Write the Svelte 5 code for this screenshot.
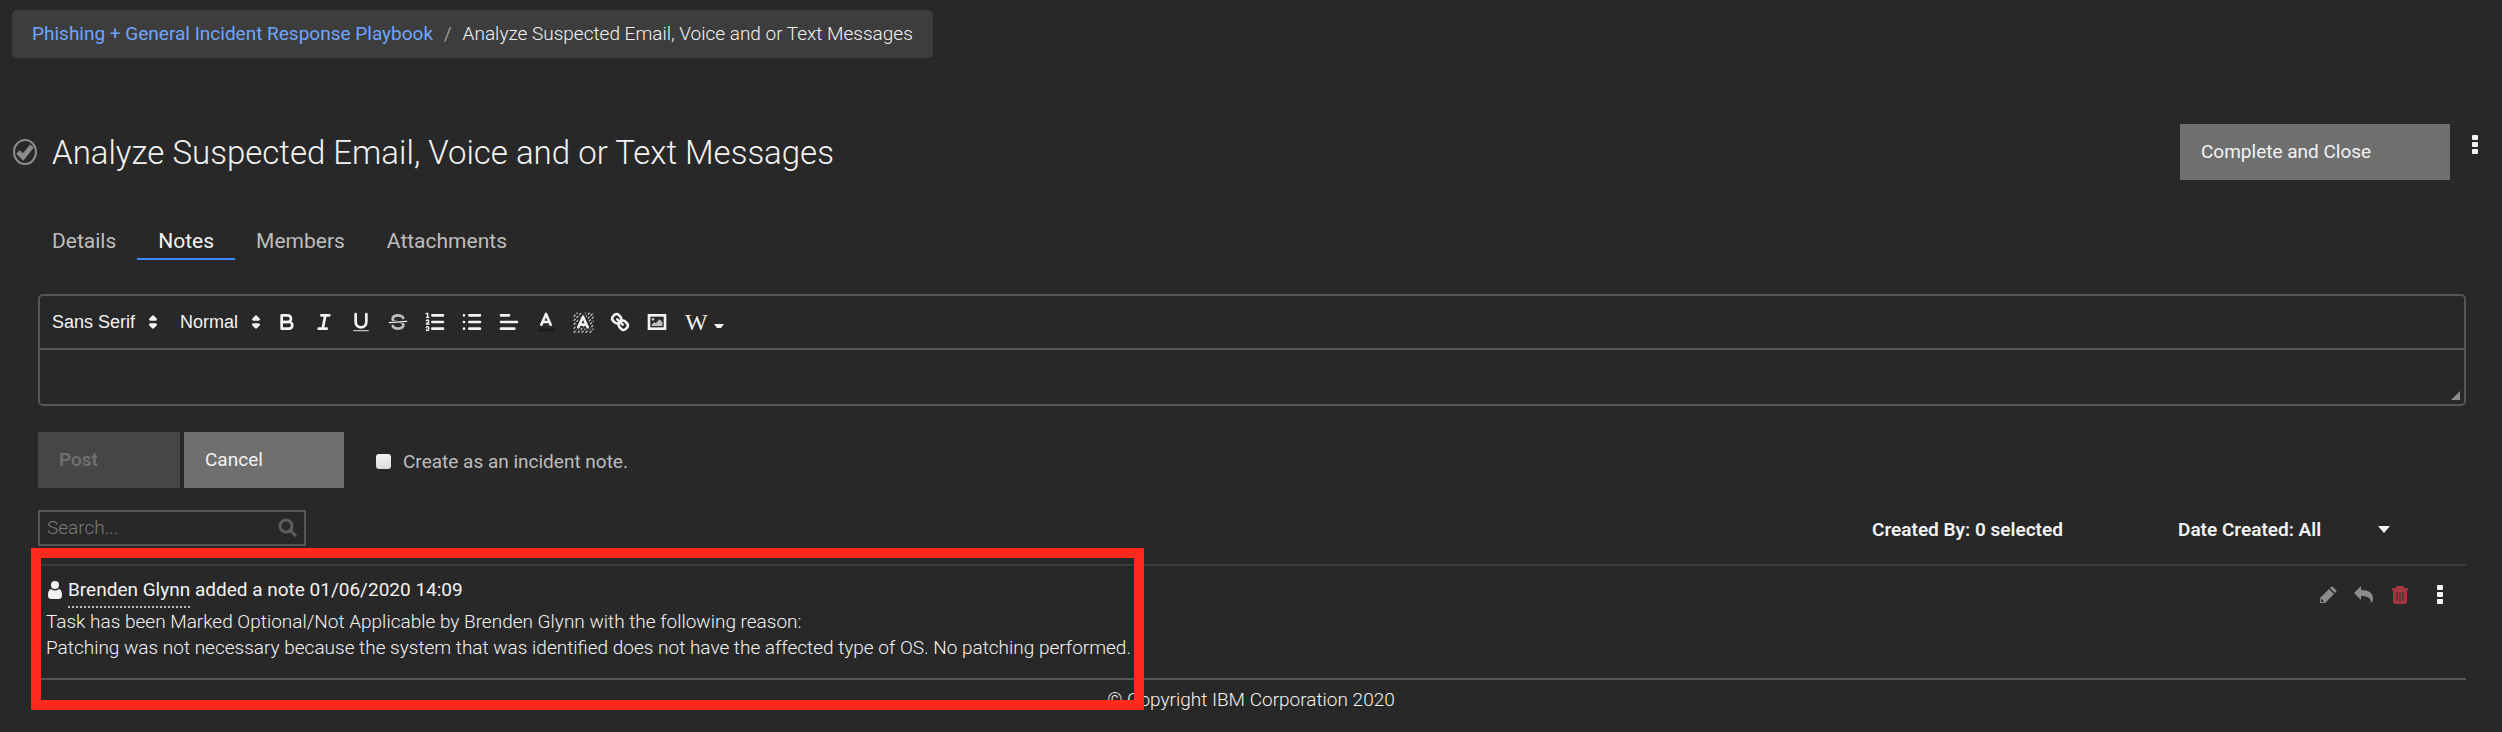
<script lang="ts">
  const tabs = ['Details', 'Notes', 'Members', 'Attachments'];
  let activeTab = $state('Notes');
  let noteBody = $state('');
  let incidentNote = $state(false);
  let search = $state('');
</script>

{#snippet dots()}
  <svg class="dots" viewBox="0 0 6 20" aria-hidden="true">
    <rect x="0" y="0" width="6" height="5" rx="1" />
    <rect x="0" y="7" width="6" height="5" rx="1" />
    <rect x="0" y="14" width="6" height="5" rx="1" />
  </svg>
{/snippet}

{#snippet pickerArrows()}
  <svg class="icon" viewBox="0 0 18 18" aria-hidden="true">
    <polygon class="solid" points="7 11 9 13 11 11 7 11" />
    <polygon class="solid" points="7 7 9 5 11 7 7 7" />
  </svg>
{/snippet}

<div class="page">
  <nav class="breadcrumb">
    <a href="#playbook">Phishing + General Incident Response Playbook</a>
    <span class="slash">/</span>
    <span>Analyze Suspected Email, Voice and or Text Messages</span>
  </nav>

  <header class="task-header">
    <svg class="status" viewBox="0 0 26 28" aria-hidden="true">
      <ellipse cx="13" cy="14" rx="11" ry="12" />
      <path d="M6 14l5 5 9-11" />
    </svg>
    <h1>Analyze Suspected Email, Voice and or Text Messages</h1>
    <button class="btn complete">Complete and Close</button>
    <button class="plain menu" aria-label="Task menu">{@render dots()}</button>
  </header>

  <div class="tabs" role="tablist">
    {#each tabs as tab}
      <button
        class="tab"
        class:active={tab === activeTab}
        role="tab"
        aria-selected={tab === activeTab}
        onclick={() => (activeTab = tab)}>{tab}</button>
    {/each}
  </div>

  <main>
    <div class="editor">
      <div class="toolbar">
        <button class="plain picker">Sans Serif {@render pickerArrows()}</button>
        <button class="plain picker">Normal {@render pickerArrows()}</button>
        <div class="tools">
          <button class="plain" aria-label="Bold">
            <svg class="icon" viewBox="0 0 18 18">
              <path d="M5,4H9.5a2.5,2.5,0,0,1,0,5H5Z" />
              <path d="M5,9h5.5a2.5,2.5,0,0,1,0,5H5Z" />
            </svg>
          </button>
          <button class="plain" aria-label="Italic">
            <svg class="icon" viewBox="0 0 18 18">
              <path d="M7,4H13M5,14H11M8,14L10,4" />
            </svg>
          </button>
          <button class="plain" aria-label="Underline">
            <svg class="icon" viewBox="0 0 18 18">
              <path d="M5,3V9a4,4,0,0,0,8,0V3" />
              <rect class="dim" x="3" y="15" width="12" height="1" rx="0.5" />
            </svg>
          </button>
          <button class="plain" aria-label="Strike">
            <svg class="icon" viewBox="0 0 18 18">
              <path class="dim" d="M9.007,8C6.542,7.791,6,7.519,6,6.5,6,5.792,7.283,5,9,5c1.571,0,2.765.679,2.969,1.309a1,1,0,0,0,1.9-.617C13.356,4.106,11.354,3,9,3,6.2,3,4,4.538,4,6.5a3.2,3.2,0,0,0,.5,1.843Z" />
              <path class="dim" d="M8.984,10C11.457,10.208,12,10.479,12,11.5c0,.708-1.283,1.5-3,1.5-1.571,0-2.765-.679-2.969-1.309a1,1,0,1,0-1.9.617C4.644,13.894,6.646,15,9,15c2.8,0,5-1.538,5-3.5a3.2,3.2,0,0,0-.5-1.843Z" />
              <path class="thin" d="M15.5,8.5L2.5,9.5" />
            </svg>
          </button>
          <button class="plain" aria-label="Numbered list">
            <svg class="icon" viewBox="0 0 18 18">
              <path d="M7,4H15M7,9H15M7,14H15" />
              <path class="thin" d="M2.5,5.5h2M2.3,2.9l1.2-.5V5.5" />
              <path class="thin" d="M4.5,10.5h-2c0-.234,1.85-1.076,1.85-2.234A.959,.959,0,0,0,2.5,8.156" />
              <path class="thin" d="M2.5,14.846a.959,.959,0,0,0,1.85-.109A.7,.7,0,0,0,3.75,14a.688,.688,0,0,0,.6-.736,.959,.959,0,0,0-1.85-.109" />
            </svg>
          </button>
          <button class="plain" aria-label="Bulleted list">
            <svg class="icon" viewBox="0 0 18 18">
              <path d="M7,4H15M7,9H15M7,14H15M3,4H3M3,9H3M3,14H3" />
            </svg>
          </button>
          <button class="plain" aria-label="Align">
            <svg class="icon" viewBox="0 0 18 18">
              <path d="M3,9H15M3,14H13M3,4H9" />
            </svg>
          </button>
          <button class="plain" aria-label="Text color">
            <svg class="icon" viewBox="0 0 18 18">
              <path class="swatch" d="M3,15H15" />
              <path d="M5.5,11L9,3L12.5,11M11.63,9H6.38" />
            </svg>
          </button>
          <button class="plain" aria-label="Highlight color">
            <svg class="icon" viewBox="0 0 18 18">
              <path class="hatch" d="M2,5L5,2M2,8L8,2M2,11L11,2M2,14L14,2M2,17L17,2M5,17L17,5M8,17L17,8M11,17L17,11M14,17L17,14" />
              <path class="knock" d="M5.5,13L9,5L12.5,13" />
              <path d="M5.5,13L9,5L12.5,13M11.63,11H6.38" />
            </svg>
          </button>
          <button class="plain" aria-label="Link">
            <svg class="icon" viewBox="0 0 18 18">
              <path d="M7,7L11,11" />
              <path d="M8.9,4.577a3.476,3.476,0,0,1,.36,4.679A3.476,3.476,0,0,1,4.577,8.9C3.185,7.5,2.035,6.4,4.217,4.217S7.5,3.185,8.9,4.577Z" />
              <path d="M13.423,9.1a3.476,3.476,0,0,0-4.679-.36,3.476,3.476,0,0,0,.36,4.679c1.392,1.392,2.5,2.542,4.679.36S14.815,10.5,13.423,9.1Z" />
            </svg>
          </button>
          <button class="plain" aria-label="Image">
            <svg class="icon" viewBox="0 0 18 18">
              <rect class="frame" x="3" y="4" width="12" height="10" />
              <circle class="dim" cx="6" cy="7" r="1" />
              <polygon class="dim" points="5 12 5 11 7 9 8 10 11 7 13 9 13 12" />
            </svg>
          </button>
        </div>
        <button class="plain wiki" aria-label="Insert field">
          W
          <svg class="wiki-caret" viewBox="0 0 10 5"><path d="M0 0h10L7 4H3z" /></svg>
        </button>
      </div>
      <div class="body">
        <textarea aria-label="Note" rows="1" bind:value={noteBody}></textarea>
        <svg class="grip" viewBox="0 0 9 9" aria-hidden="true"><path d="M9 0v9H0z" /></svg>
      </div>
    </div>

    <div class="actions">
      <button class="btn post" disabled>Post</button>
      <button class="btn cancel">Cancel</button>
      <label class="incident">
        <input type="checkbox" bind:checked={incidentNote} />
        Create as an incident note.
      </label>
    </div>

    <div class="filters">
      <div class="search">
        <input type="text" placeholder="Search..." aria-label="Search notes" bind:value={search} />
        <svg viewBox="0 0 20 20" aria-hidden="true">
          <circle cx="8" cy="8" r="6" />
          <path d="M12 12l6 6" />
        </svg>
      </div>
      <button class="plain filter created-by">Created By: 0 selected</button>
      <button class="plain filter date-created">
        Date Created: All
        <svg viewBox="0 0 12 7" aria-hidden="true"><path d="M0 0h12L6 7z" /></svg>
      </button>
    </div>

    <article class="note">
      <div class="note-text">
        <div class="byline">
          <svg viewBox="0 0 14 18" aria-hidden="true">
            <circle cx="7" cy="4" r="4" />
            <path d="M3 8q4 3 8 0q3 1 3 6q0 4-3 4H3q-3 0-3-4q0-5 3-6z" />
          </svg>
          <span><span class="author">Brenden Glynn</span> added a note 01/06/2020 14:09</span>
        </div>
        <p>Task has been Marked Optional/Not Applicable by Brenden Glynn with the following reason:</p>
        <p>Patching was not necessary because the system that was identified does not have the affected type of OS. No patching performed.</p>
      </div>
      <div class="note-actions">
        <button class="plain" aria-label="Edit">
          <svg class="edit" viewBox="0 0 18 18">
            <path fill-rule="evenodd" d="M1 17v-5l9-9 5 5-9 9zM2 13v3h3v-1H4v-1H3v-1zM11 2l1-1q1-1 2 0l3 3q1 1 0 2l-1 1z" />
          </svg>
        </button>
        <button class="plain" aria-label="Reply">
          <svg class="reply" viewBox="0 0 20 18"><path d="M0 7L7 0v4c8 0 12 3 12 9 0 2-1 3-2 4 0-5-3-7-10-7v4z" /></svg>
        </button>
        <button class="plain" aria-label="Delete">
          <svg class="trash" viewBox="0 0 18 20">
            <path class="lid" d="M1 4H17M6 4V2H12V4" />
            <path d="M2 5H16V17q0 2-2 2H4q-2 0-2-2z" />
            <path class="ribs" d="M6 7V16M9 7V16M12 7V16" />
          </svg>
        </button>
        <button class="plain more" aria-label="Note menu">{@render dots()}</button>
      </div>
      <div class="highlight"></div>
    </article>
  </main>

  <footer>© Copyright IBM Corporation 2020</footer>
</div>

<style>
  :global(body) {
    background: #282828;
  }

  .page {
    box-sizing: border-box;
    min-height: 100vh;
    padding-top: 10px;
    background: #282828;
    color: #f3f3f3;
    font: 300 19px/26px Roboto, sans-serif;
  }

  button,
  input,
  textarea {
    font: inherit;
    color: inherit;
  }

  svg {
    flex-shrink: 0;
    fill: currentColor;
  }

  .plain {
    display: flex;
    align-items: center;
    padding: 0;
    border: 0;
    background: none;
  }

  .breadcrumb {
    display: flex;
    gap: 11px;
    width: fit-content;
    margin-left: 12px;
    padding: 11px 20px;
    border-radius: 5px;
    background: #3d3d3d;
  }

  .breadcrumb a {
    color: #6ea6ff;
    font-weight: 400;
    text-decoration: none;
  }

  .slash {
    color: #bebebe;
  }

  .task-header {
    display: flex;
    align-items: center;
    margin: 66px 24px 0 12px;
  }

  .status {
    width: 26px;
    height: 28px;
    fill: none;
    stroke: #8c8c8c;
    stroke-width: 5;
  }

  .status ellipse {
    stroke-width: 2;
  }

  h1 {
    flex: 1;
    margin: 0 0 0 14px;
    padding-top: 2px;
    font-size: 33px;
    line-height: 40px;
    font-weight: 300;
  }

  .btn {
    height: 56px;
    padding: 0 21px;
    border: 0;
    background: #6f6f6f;
    font-weight: 400;
    text-align: left;
  }

  .complete {
    width: 270px;
  }

  .dots {
    width: 6px;
    height: 20px;
  }

  .menu {
    margin: 0 0 14px 22px;
  }

  .tabs {
    display: flex;
    margin: 40px 0 0 31px;
  }

  .tab {
    padding: 8px 21px 4px;
    border: 0;
    border-bottom: 2px solid transparent;
    background: none;
    color: #bebebe;
    font-size: 21px;
    font-weight: 400;
  }

  .tab.active {
    border-color: #408bfc;
    color: #f3f3f3;
  }

  main {
    margin: 34px 36px 0 38px;
  }

  .editor {
    border: 2px solid #565656;
    border-radius: 5px;
  }

  .toolbar {
    display: flex;
    align-items: center;
    height: 52px;
    padding-left: 12px;
    border-bottom: 2px solid #565656;
  }

  .picker {
    gap: 6px;
    font: 18px/24px "Liberation Sans", Arial, sans-serif;
  }

  .picker + .picker {
    margin-left: 15px;
  }

  .icon {
    display: block;
    width: 24px;
    height: 24px;
    fill: none;
    stroke: #f3f3f3;
    stroke-width: 2;
    stroke-linecap: round;
    stroke-linejoin: round;
  }

  .solid {
    fill: #f3f3f3;
  }

  .thin {
    stroke-width: 1;
  }

  .dim {
    fill: #bebebe;
    stroke: none;
  }

  .frame {
    stroke-linejoin: miter;
  }

  .swatch {
    stroke: #1c1c1c;
    stroke-linecap: butt;
  }

  .hatch {
    stroke-width: 1;
    stroke-dasharray: 2 1;
    stroke-linecap: butt;
    stroke: #bebebe;
  }

  .knock {
    stroke: #282828;
    stroke-width: 4;
  }

  .tools {
    display: flex;
    gap: 13px;
    margin: 0 16px 0 7px;
  }

  .wiki {
    gap: 6px;
    font: 24px/28px "Liberation Serif", serif;
  }

  .wiki-caret {
    width: 10px;
    height: 5px;
    margin-top: 9px;
  }

  .body {
    position: relative;
  }

  textarea {
    display: block;
    box-sizing: border-box;
    width: 100%;
    height: 54px;
    padding: 14px 16px;
    border: 0;
    background: none;
    resize: none;
  }

  .grip {
    position: absolute;
    right: 4px;
    bottom: 4px;
    width: 9px;
    height: 9px;
    color: #8c8c8c;
  }

  .actions {
    display: flex;
    align-items: center;
    gap: 4px;
    margin-top: 26px;
  }

  .post {
    width: 142px;
    background: #464646;
    color: #6f6f6f;
    font-weight: 600;
  }

  .cancel {
    width: 160px;
  }

  .incident {
    display: flex;
    align-items: center;
    gap: 12px;
    margin-left: 28px;
    padding-top: 3px;
    color: #bebebe;
    font-weight: 400;
  }

  .incident input {
    appearance: none;
    width: 15px;
    height: 15px;
    margin: 0;
    border-radius: 3px;
    background: linear-gradient(#f3f3f3, #dcdcdc);
  }

  .filters {
    display: flex;
    align-items: center;
    margin-top: 22px;
  }

  .search {
    box-sizing: border-box;
    display: flex;
    align-items: center;
    width: 268px;
    height: 36px;
    padding: 0 6px 0 7px;
    border: 2px solid #565656;
  }

  .search input {
    flex: 1;
    min-width: 0;
    padding: 0;
    border: 0;
    background: none;
  }

  .search input::placeholder {
    color: #7a7a7a;
    opacity: 1;
  }

  .search svg {
    width: 20px;
    height: 20px;
    fill: none;
    stroke: #5e5e5e;
    stroke-width: 3;
  }

  .filter {
    padding-top: 3px;
    font-weight: 600;
  }

  .created-by {
    width: 306px;
    margin-left: auto;
  }

  .date-created {
    justify-content: space-between;
    width: 212px;
    margin-right: 76px;
  }

  .date-created svg {
    width: 12px;
    height: 7px;
  }

  .note {
    position: relative;
    display: flex;
    justify-content: space-between;
    margin-top: 18px;
    padding: 11px 0 17px;
    border-top: 2px solid #3d3d3d;
    border-bottom: 2px solid #565656;
  }

  .note-text {
    padding-left: 8px;
  }

  .byline {
    display: flex;
    align-items: center;
    gap: 6px;
    margin-bottom: 6px;
    padding-left: 2px;
    font-weight: 400;
  }

  .byline svg {
    width: 14px;
    height: 18px;
  }

  .author {
    padding-bottom: 5px;
    border-bottom: 2px dotted #bebebe;
  }

  .note p {
    margin: 0;
  }

  .note-actions {
    display: flex;
    align-items: center;
    gap: 17px;
    height: 36px;
    margin-right: 23px;
    color: #8c8c8c;
  }

  .edit {
    width: 18px;
    height: 18px;
  }

  .reply {
    width: 20px;
    height: 18px;
  }

  .trash {
    width: 18px;
    height: 20px;
    fill: #a2373f;
  }

  .lid {
    fill: none;
    stroke: #a2373f;
    stroke-width: 2;
  }

  .ribs {
    stroke: #282828;
  }

  .more {
    margin-left: 11px;
    color: #f3f3f3;
  }

  .highlight {
    position: absolute;
    top: -18px;
    bottom: -32px;
    left: -7px;
    box-sizing: border-box;
    width: 1113px;
    border: 10px solid #ff2a1c;
    pointer-events: none;
  }

  footer {
    padding: 7px 0 12px;
    text-align: center;
  }
</style>
